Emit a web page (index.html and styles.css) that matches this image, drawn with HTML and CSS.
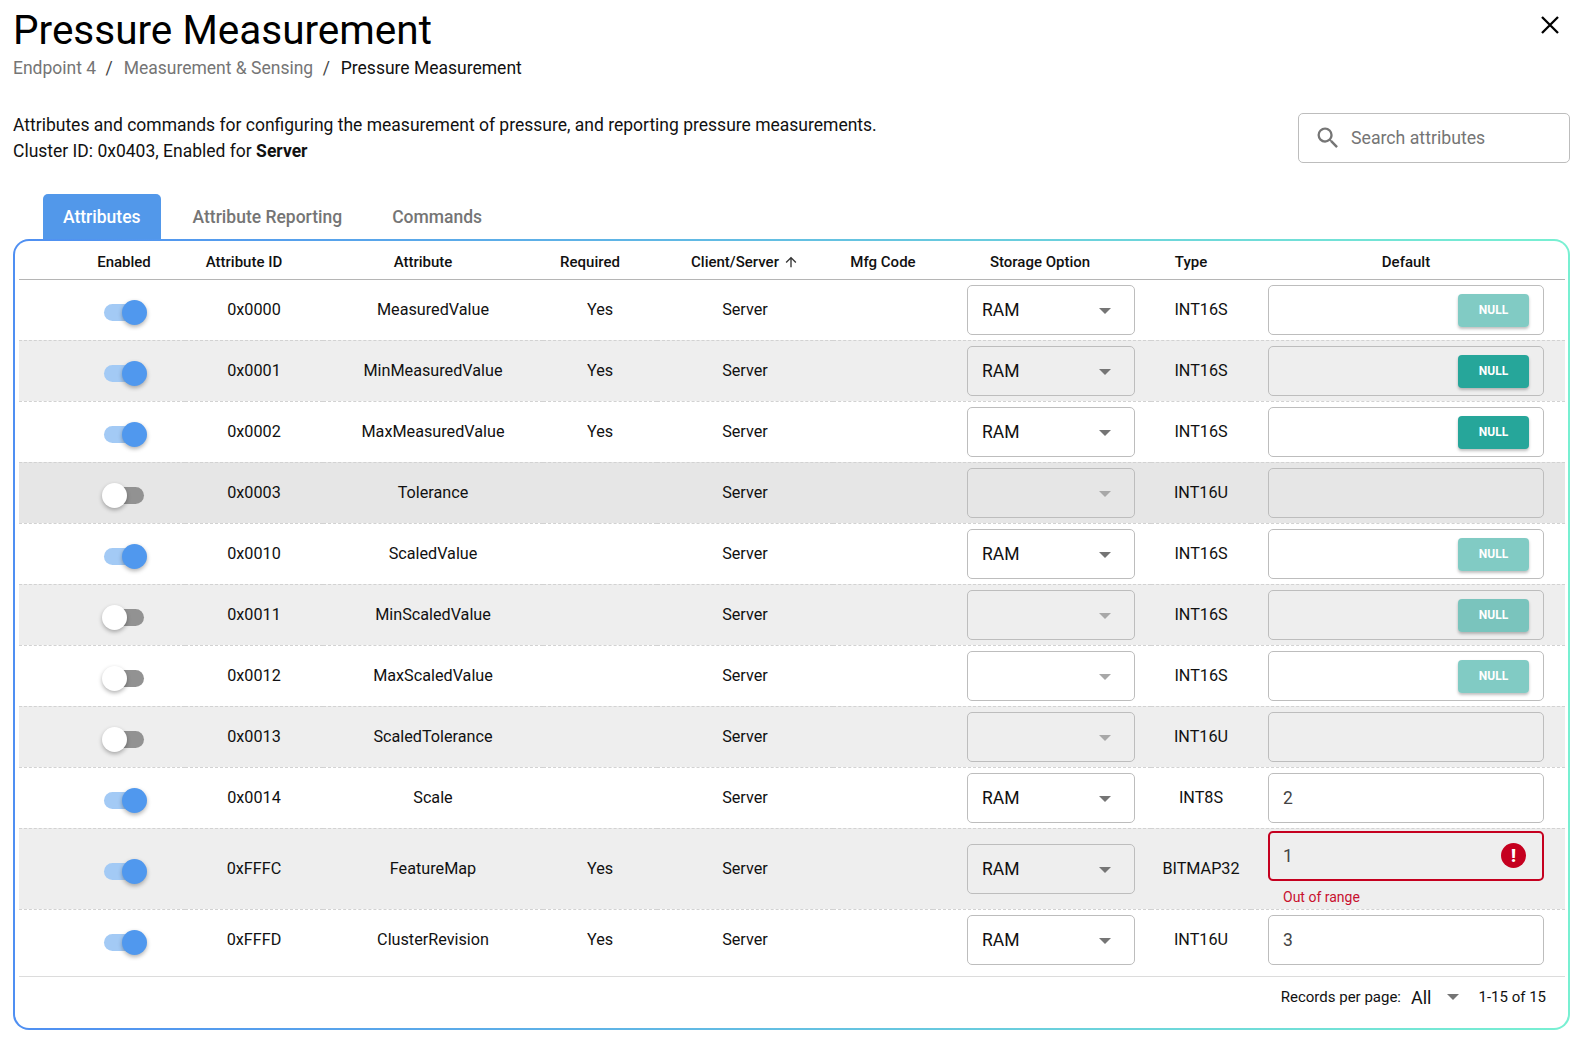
FILE: index.html
```html
<!DOCTYPE html>
<html lang="en">
<head>
    <meta charset="UTF-8">
    <meta name="viewport" content="width=device-width, initial-scale=1.0">
    <title>Pressure Measurement</title>
    <link rel="stylesheet" href="styles.css">
</head>
<body>
    <div class="title-row">
        <h1>Pressure Measurement</h1>
        <svg class="close-icon" viewBox="0 0 18 18" width="18" height="18"><path d="M1 1 17 17M17 1 1 17" fill="none" stroke="#000" stroke-width="2.3"/></svg>
    </div>
    <div class="breadcrumbs">
        <span class="crumb">Endpoint 4</span><span class="slash">/</span>
        <span class="crumb">Measurement &amp; Sensing</span><span class="slash">/</span>
        <span>Pressure Measurement</span>
    </div>

    <div class="intro">
        <div class="description">
            <p>Attributes and commands for configuring the measurement of pressure, and reporting pressure measurements.</p>
            <p>Cluster ID: 0x0403, Enabled for <b>Server</b></p>
        </div>
        <div class="search">
            <svg viewBox="0 0 24 24" width="28" height="28"><path d="M9.5 3A6.5 6.5 0 0 1 16 9.5c0 1.61-.59 3.09-1.56 4.23l.27.27h.79l5 5-1.5 1.5-5-5v-.79l-.27-.27A6.516 6.516 0 0 1 9.5 16 6.5 6.5 0 0 1 3 9.5 6.5 6.5 0 0 1 9.5 3m0 2C7 5 5 7 5 9.5S7 14 9.5 14 14 12 14 9.5 12 5 9.5 5z" fill="#757575"/></svg>
            <span>Search attributes</span>
        </div>
    </div>

    <div class="tabs">
        <div class="tab active">Attributes</div>
        <div class="tab">Attribute Reporting</div>
        <div class="tab">Commands</div>
    </div>

    <div class="panel">
        <table>
            <colgroup>
                <col class="c-enabled"><col class="c-id"><col class="c-name"><col class="c-required"><col class="c-side"><col class="c-mfg"><col class="c-storage"><col class="c-type"><col class="c-default">
            </colgroup>
            <thead>
                <tr>
                    <th class="th-enabled">Enabled</th>
                    <th class="sortable">Attribute ID</th>
                    <th class="sortable">Attribute</th>
                    <th class="sortable">Required</th>
                    <th class="sortable sorted">Client/Server<svg viewBox="0 0 24 24" width="16" height="16"><path d="M4 12l1.41 1.41L11 7.83V20h2V7.83l5.58 5.59L20 12l-8-8-8 8z" fill="#333"/></svg></th>
                    <th>Mfg Code</th>
                    <th class="th-storage">Storage Option</th>
                    <th class="sortable">Type</th>
                    <th class="th-default">Default</th>
                </tr>
            </thead>
            <tbody>
                <tr>
                    <td class="td-enabled"><span class="switch on"></span></td><td>0x0000</td><td>MeasuredValue</td><td>Yes</td><td>Server</td><td></td>
                    <td class="td-storage"><div class="select">RAM<i class="caret"></i></div></td><td>INT16S</td>
                    <td class="td-default"><div class="field"><span class="null-btn faded">NULL</span></div></td>
                </tr>
                <tr>
                    <td class="td-enabled"><span class="switch on"></span></td><td>0x0001</td><td>MinMeasuredValue</td><td>Yes</td><td>Server</td><td></td>
                    <td class="td-storage"><div class="select">RAM<i class="caret"></i></div></td><td>INT16S</td>
                    <td class="td-default"><div class="field"><span class="null-btn">NULL</span></div></td>
                </tr>
                <tr>
                    <td class="td-enabled"><span class="switch on"></span></td><td>0x0002</td><td>MaxMeasuredValue</td><td>Yes</td><td>Server</td><td></td>
                    <td class="td-storage"><div class="select">RAM<i class="caret"></i></div></td><td>INT16S</td>
                    <td class="td-default"><div class="field"><span class="null-btn">NULL</span></div></td>
                </tr>
                <tr class="hovered">
                    <td class="td-enabled"><span class="switch"></span></td><td>0x0003</td><td>Tolerance</td><td></td><td>Server</td><td></td>
                    <td class="td-storage"><div class="select"><i class="caret off"></i></div></td><td>INT16U</td>
                    <td class="td-default"><div class="field"></div></td>
                </tr>
                <tr>
                    <td class="td-enabled"><span class="switch on"></span></td><td>0x0010</td><td>ScaledValue</td><td></td><td>Server</td><td></td>
                    <td class="td-storage"><div class="select">RAM<i class="caret"></i></div></td><td>INT16S</td>
                    <td class="td-default"><div class="field"><span class="null-btn faded">NULL</span></div></td>
                </tr>
                <tr>
                    <td class="td-enabled"><span class="switch"></span></td><td>0x0011</td><td>MinScaledValue</td><td></td><td>Server</td><td></td>
                    <td class="td-storage"><div class="select"><i class="caret off"></i></div></td><td>INT16S</td>
                    <td class="td-default"><div class="field"><span class="null-btn faded">NULL</span></div></td>
                </tr>
                <tr>
                    <td class="td-enabled"><span class="switch"></span></td><td>0x0012</td><td>MaxScaledValue</td><td></td><td>Server</td><td></td>
                    <td class="td-storage"><div class="select"><i class="caret off"></i></div></td><td>INT16S</td>
                    <td class="td-default"><div class="field"><span class="null-btn faded">NULL</span></div></td>
                </tr>
                <tr>
                    <td class="td-enabled"><span class="switch"></span></td><td>0x0013</td><td>ScaledTolerance</td><td></td><td>Server</td><td></td>
                    <td class="td-storage"><div class="select"><i class="caret off"></i></div></td><td>INT16U</td>
                    <td class="td-default"><div class="field"></div></td>
                </tr>
                <tr>
                    <td class="td-enabled"><span class="switch on"></span></td><td>0x0014</td><td>Scale</td><td></td><td>Server</td><td></td>
                    <td class="td-storage"><div class="select">RAM<i class="caret"></i></div></td><td>INT8S</td>
                    <td class="td-default"><div class="field">2</div></td>
                </tr>
                <tr class="row-error">
                    <td class="td-enabled"><span class="switch on"></span></td><td>0xFFFC</td><td>FeatureMap</td><td>Yes</td><td>Server</td><td></td>
                    <td class="td-storage"><div class="select">RAM<i class="caret"></i></div></td><td>BITMAP32</td>
                    <td class="td-default">
                        <div class="field error">1<span class="error-icon">!</span></div>
                        <div class="hint">Out of range</div>
                    </td>
                </tr>
                <tr class="row-last">
                    <td class="td-enabled"><span class="switch on"></span></td><td>0xFFFD</td><td>ClusterRevision</td><td>Yes</td><td>Server</td><td></td>
                    <td class="td-storage"><div class="select">RAM<i class="caret"></i></div></td><td>INT16U</td>
                    <td class="td-default"><div class="field">3</div></td>
                </tr>
            </tbody>
        </table>
        <div class="pager">
            <span class="pager-label">Records per page:</span>
            <span class="pager-all">All</span>
            <i class="caret"></i>
            <span class="pager-range">1-15 of 15</span>
        </div>
    </div>
</body>
</html>
```

FILE: styles.css
```css
* {
    box-sizing: border-box;
}

html, body {
    height: 100%;
}

body {
    margin: 0;
    padding: 0 8px 0 13px;
    font-family: Roboto, sans-serif;
    color: #111;
    background-color: #fff;
    overflow: hidden;
}

.title-row {
    display: flex;
    justify-content: space-between;
    padding-top: 6px;
}

h1 {
    margin: 0;
    font-size: 40.5px;
    line-height: 48px;
    font-weight: 400;
    color: #000;
}

.close-icon {
    margin: 10px 11px 0 0;
}

.breadcrumbs {
    font-size: 17.5px;
    line-height: 26px;
    margin-top: 1px;
}

.crumb {
    color: #757575;
}

.slash {
    color: #444;
    margin: 0 6.5px 0 9.5px;
}

.intro {
    display: flex;
    justify-content: space-between;
    margin-top: 31px;
}

.description p {
    margin: 0;
    font-size: 17.5px;
    line-height: 26px;
}

.description b {
    font-weight: 700;
}

.search {
    display: flex;
    align-items: center;
    gap: 9px;
    width: 272px;
    height: 50px;
    margin-top: 1px;
    padding-left: 15px;
    border: 1px solid #bdbdbd;
    border-radius: 5px;
    font-size: 17.7px;
    color: #757575;
}

.tabs {
    display: flex;
    margin: 30px 0 0 30px;
    height: 45px;
}

.tab {
    height: 45px;
    padding: 0 25px;
    font-size: 17.5px;
    line-height: 47px;
    font-weight: 500;
    color: #757575;
}

.tab.active {
    padding: 0 20px;
    margin-right: 7px;
    color: #fff;
    background-color: #5298ea;
    border-radius: 5px 5px 0 0;
}

.panel {
    height: 791px;
    padding: 0 3px 0 4px;
    border: 2px solid transparent;
    border-radius: 16px;
    background: linear-gradient(#fff, #fff) padding-box, linear-gradient(90deg, #4f8ff2, #78f0d2) border-box;
}

table {
    width: 100%;
    table-layout: fixed;
    border-collapse: collapse;
}

.c-enabled { width: 166px; }
.c-id { width: 138px; }
.c-name { width: 220px; }
.c-required { width: 114px; }
.c-side { width: 176px; }
.c-mfg { width: 100px; }
.c-storage { width: 218px; }
.c-type { width: 100px; }
.c-default { width: 314px; }

th {
    height: 38px;
    padding: 5px 0 0;
    font-size: 15px;
    font-weight: 500;
    text-align: center;
    white-space: nowrap;
    border-bottom: 1px solid #b5b5b5;
}

th.sortable {
    padding-right: 20px;
}

th.sorted {
    padding-right: 0;
}

th svg {
    margin-left: 4px;
    vertical-align: -3px;
}

.th-enabled {
    padding-left: 44px;
}

.th-storage {
    padding-right: 4px;
}

.th-default {
    padding-right: 4px;
}

td {
    height: 61px;
    padding: 0;
    font-size: 16.2px;
    text-align: center;
    white-space: nowrap;
    border-bottom: 1px dashed #d2d2d2;
}

tbody tr:nth-child(even) {
    background-color: #eeeeee;
}

tbody tr.hovered {
    background-color: #e6e6e6;
}

.row-error td {
    height: 81px;
}

.row-last td {
    height: 67px;
    padding-bottom: 6px;
    border-bottom: 1px solid #dcdcdc;
}

.td-enabled {
    padding-left: 44px;
}

td.td-storage {
    padding-left: 34px;
    padding-right: 16px;
}

td.td-default {
    padding-left: 17px;
    padding-right: 21px;
    text-align: left;
}

.switch {
    position: relative;
    display: block;
    width: 40px;
    height: 17px;
    margin: 6px auto 0;
    border-radius: 9px;
    background-color: #929292;
}

.switch::after {
    content: "";
    position: absolute;
    left: -2px;
    top: -4px;
    width: 25px;
    height: 25px;
    border-radius: 50%;
    background-color: #fff;
    box-shadow: 0 2px 4px rgba(0, 0, 0, 0.3);
}

.switch.on {
    background-color: #a3caf5;
}

.switch.on::after {
    left: 18px;
    background-color: #5098ee;
}

.select {
    position: relative;
    height: 50px;
    padding-left: 14px;
    border: 1px solid #bdbdbd;
    border-radius: 5px;
    font-size: 17.5px;
    line-height: 48px;
    text-align: left;
}

.caret {
    display: inline-block;
    width: 0;
    height: 0;
    border-left: 6px solid transparent;
    border-right: 6px solid transparent;
    border-top: 6px solid #757575;
}

.caret.off {
    border-top-color: #a8a8a8;
}

.select .caret {
    position: absolute;
    right: 23px;
    top: 22px;
}

.field {
    position: relative;
    display: flex;
    align-items: center;
    justify-content: space-between;
    height: 50px;
    padding: 0 14px;
    border: 1px solid #bdbdbd;
    border-radius: 5px;
    font-size: 17.5px;
    color: #444;
}

.null-btn {
    width: 71px;
    height: 33px;
    margin: 2px 0 0 auto;
    border-radius: 4px;
    font-size: 12px;
    line-height: 33px;
    font-weight: 700;
    text-align: center;
    color: #fff;
    background-color: #26a69a;
    box-shadow: 0 2px 3px rgba(0, 0, 0, 0.25);
}

.null-btn.faded {
    background-color: rgba(38, 166, 154, 0.58);
}

.field.error {
    border: 2px solid #c5001f;
    padding: 0 16px 0 13px;
}

.error-icon {
    width: 25px;
    height: 25px;
    border-radius: 50%;
    background-color: #c5001f;
    color: #fff;
    font-size: 18px;
    font-weight: 900;
    line-height: 25px;
    text-align: center;
}

.row-error .td-default {
    vertical-align: top;
    padding-top: 2px;
}

.hint {
    margin-top: 8px;
    padding-left: 15px;
    font-size: 14px;
    line-height: 16px;
    color: #c8102e;
}

.pager {
    display: flex;
    align-items: center;
    justify-content: flex-end;
    height: 41px;
    padding-right: 19px;
}

.pager-label {
    font-size: 15px;
}

.pager-all {
    margin-left: 10px;
    font-size: 18px;
}

.pager .caret {
    margin-left: 16px;
}

.pager-range {
    margin-left: 19px;
    font-size: 15px;
}
```
